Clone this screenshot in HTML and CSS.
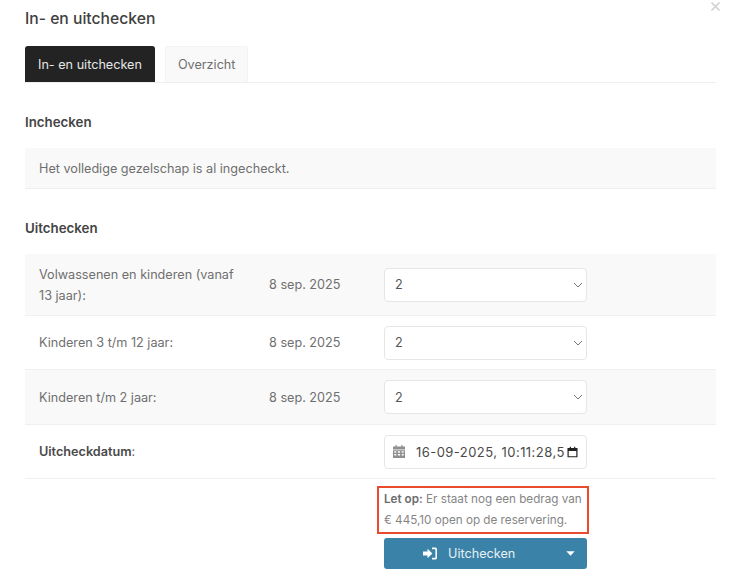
FILE: index.html
```html
<!DOCTYPE html>
<html lang="nl">
<head>
<meta charset="utf-8">
<title>In- en uitchecken</title>
<link rel="stylesheet" href="styles.css">
</head>
<body>
<main class="modal">
  <button class="close" aria-label="Sluiten"><svg width="9" height="9" viewBox="0 0 9 9"><path d="M.5.5l8 8M8.500.5l-8 8" stroke="#d4d4d4" stroke-width="1.6" fill="none"/></svg></button>
  <h1 class="title">In- en uitchecken</h1>
  <nav class="tabs">
    <a class="tab tab-active">In- en uitchecken</a>
    <a class="tab">Overzicht</a>
  </nav>
  <h2 class="section section-first">Inchecken</h2>
  <div class="notice">Het volledige gezelschap is al ingecheckt.</div>
  <h2 class="section section-second">Uitchecken</h2>
  <div class="rows">
    <div class="row row-odd row-a">
      <div class="label">Volwassenen en kinderen (vanaf 13 jaar):</div>
      <div class="date">8 sep. 2025</div>
      <div class="field"><div class="control"><span>2</span><svg class="chev" width="10" height="6" viewBox="0 0 10 6"><path d="M1 1l4 4 4-4" stroke="#777" stroke-width="1" fill="none"/></svg></div></div>
    </div>
    <div class="row row-b">
      <div class="label">Kinderen 3 t/m 12 jaar:</div>
      <div class="date">8 sep. 2025</div>
      <div class="field"><div class="control"><span>2</span><svg class="chev" width="10" height="6" viewBox="0 0 10 6"><path d="M1 1l4 4 4-4" stroke="#777" stroke-width="1" fill="none"/></svg></div></div>
    </div>
    <div class="row row-odd row-c">
      <div class="label">Kinderen t/m 2 jaar:</div>
      <div class="date">8 sep. 2025</div>
      <div class="field"><div class="control"><span>2</span><svg class="chev" width="10" height="6" viewBox="0 0 10 6"><path d="M1 1l4 4 4-4" stroke="#777" stroke-width="1" fill="none"/></svg></div></div>
    </div>
    <div class="row row-b">
      <div class="label"><strong>Uitcheckdatum</strong>:</div>
      <div class="date"></div>
      <div class="field">
        <div class="control control-date">
          <svg class="cal" width="12" height="13" viewBox="0 0 12 13"><path fill="#8f8f8f" d="M2.500 0h1.200v1.500h4.600V0h1.200v1.500H12v3H0v-3h2.500zM0 5.300h12V13H0zm1.300 1v1.500h2V6.300zm3.600 0v1.500h2.200V6.300zm3.800 0v1.500h2V6.300zM1.300 9v1.500h2V9zm3.600 0v1.500h2.200V9zm3.800 0v1.500h2V9z"/></svg>
          <span class="date-value">16-09-2025, 10:11:28,5</span>
          <svg class="cal-native" width="11" height="12" viewBox="0 0 12 12"><path fill="none" stroke="#222" stroke-width="1.300" d="M1.200 2.200h9.600v9H1.200z"/><path fill="#222" d="M1 2h10v3H1zM3 .2h1.300V2H3zM7.700.2H9V2H7.700z"/></svg>
        </div>
      </div>
    </div>
    <div class="row-action">
      <p class="warning"><strong>Let op:</strong> Er staat nog een bedrag van € 445,10 open op de reservering.</p>
      <button class="submit">
        <span class="submit-main">
          <svg width="14" height="13" viewBox="0 0 14 13"><path fill="#fff" d="M0 4.500h4.500V1.800l4.900 4.700-4.900 4.700V8.500H0zM9 .5h3.200c1 0 1.800.8 1.800 1.800v8.400c0 1-.8 1.800-1.800 1.800H9v-1.700h3c.3 0 .4-.1.400-.4V2.600c0-.3-.1-.4-.4-.4H9z"/></svg>
          Uitchecken
        </span>
        <svg class="caret" width="9" height="5" viewBox="0 0 10 6"><path fill="#fff" d="M0 .3h10L5 5.700z"/></svg>
      </button>
    </div>
  </div>
</main>
</body>
</html>
```
FILE: styles.css
```css
* { box-sizing: border-box; }
html, body { margin: 0; padding: 0; background: #fff; height: 100%; overflow: hidden; }
body { font-family: Inter, "Liberation Sans", sans-serif; font-size: 12.65px; color: #6f6f6f; }
.modal { position: relative; padding: 10px 24px 0 25px; height: 576px; overflow: hidden; }
.close { position: absolute; top: 2px; right: 20px; padding: 0; border: 0; background: none; line-height: 0; }
.title { margin: 0; font-size: 15.7px; line-height: 18px; font-weight: 500; color: #404040; }
.tabs { display: flex; gap: 10px; margin-top: 18px; height: 37px; border-bottom: 1px solid #eeeeee; }
.tab { display: flex; align-items: center; height: 36px; padding: 0 11.500px 0 12px; background: #f9f9f9; border: 1px solid #f3f3f3; border-bottom: 0; border-radius: 3px 3px 0 0; }
.tab-active { padding-right: 12px; background: #232323; border-color: #232323; color: #e6e6e6; }
.section { margin: 0; font-size: 13.3px; line-height: 16px; font-weight: 600; color: #444444; }
.section-first { margin-top: 31px; }
.section-second { margin-top: 31px; }
.notice { margin-top: 18px; height: 41px; padding: 0 14px; display: flex; align-items: center; background: #f9f9f9; border-bottom: 1px solid #eeeeee; }
.rows { margin-top: 18px; }
.row { display: grid; grid-template-columns: 230px 115px 203px; align-items: center; padding-left: 14px; border-bottom: 1px solid #f0f0f0; }
.row-odd { background: #f9f9f9; }
.row-a { height: 62px; }
.row-b { height: 54px; }
.row-c { height: 55px; }
.label { line-height: 21px; padding-right: 20px; }
.label strong { font-weight: 600; color: #4a4a4a; }
.control { display: flex; align-items: center; justify-content: space-between; height: 34px; padding: 0 3px 0 10px; background: #fff; border: 1px solid #e6e6e6; border-radius: 4px; color: #555; }
.control-date { justify-content: flex-start; padding: 0 8px 0 8px; color: #4a4a4a; }
.date-value { margin-left: 11px; font-size: 13px; letter-spacing: .45px; white-space: nowrap; }
.cal-native { margin-left: auto; }
.row-action { display: flex; flex-direction: column; align-items: flex-start; padding-left: 359px; padding-top: 7px; }
.warning { margin: 0 0 0 -7px; width: 212px; height: 48px; padding: 1px 0 0 5px; border: 2px solid #ea4a2e; font-size: 11.7px; line-height: 21px; color: #858585; }
.warning strong { font-weight: 600; color: #6c6c6c; }
.submit { display: flex; align-items: center; justify-content: space-between; width: 203px; height: 31px; margin-top: 4px; padding: 0 12px 0 39px; border: 0; border-radius: 3px; background: #3b82a8; color: #e8f0f4; font: inherit; font-size: 12.65px; }
.submit-main { display: flex; align-items: center; gap: 11px; }
```
